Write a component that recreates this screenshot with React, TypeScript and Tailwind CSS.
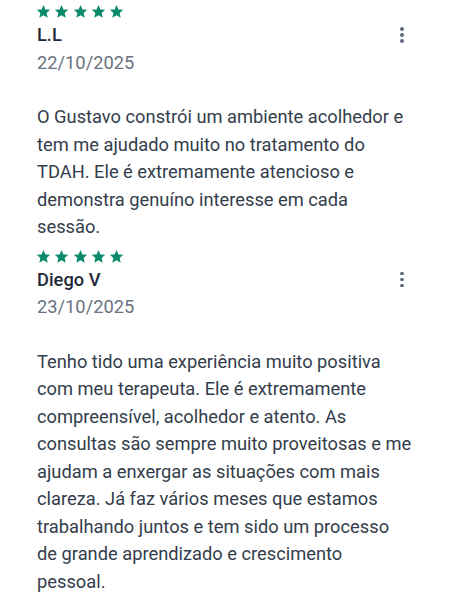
import React from 'react';

type Review = { name: string; date: string; text: string };

const reviews: Review[] = [
  {
    name: 'L.L',
    date: '22/10/2025',
    text: 'O Gustavo constrói um ambiente acolhedor e tem me ajudado muito no tratamento do TDAH. Ele é extremamente atencioso e demonstra genuíno interesse em cada sessão.',
  },
  {
    name: 'Diego V',
    date: '23/10/2025',
    text: 'Tenho tido uma experiência muito positiva com meu terapeuta. Ele é extremamente compreensível, acolhedor e atento. As consultas são sempre muito proveitosas e me ajudam a enxergar as situações com mais clareza. Já faz vários meses que estamos trabalhando juntos e tem sido um processo de grande aprendizado e crescimento pessoal.',
  },
];

const Star = () => (
  <svg width="15" height="15" viewBox="0 0 24 24" className="fill-[#0b8a6b]">
    <path d="M12 1.5l3.1 7.1 7.7.7-5.8 5.1 1.7 7.6L12 18l-6.7 4 1.7-7.6-5.8-5.1 7.7-.7z" />
  </svg>
);

const Kebab = () => (
  <button className="w-[24px] h-[24px] flex flex-col items-center justify-center gap-[2.5px]">
    <span className="w-[3.5px] h-[3.5px] rounded-full bg-[#5f6b7b]" />
    <span className="w-[3.5px] h-[3.5px] rounded-full bg-[#5f6b7b]" />
    <span className="w-[3.5px] h-[3.5px] rounded-full bg-[#5f6b7b]" />
  </button>
);

const ReviewCard: React.FC<{ review: Review }> = ({ review }) => (
  <div className="mb-[8px]">
    <div className="flex gap-[3.3px] h-[15px] -ml-[1px]">
      {[0, 1, 2, 3, 4].map(i => <Star key={i} />)}
    </div>
    <div className="mt-[2px] flex items-center justify-between">
      <span className="text-[18.3px] leading-[27.5px] font-medium text-[#1f2937]">{review.name}</span>
      <Kebab />
    </div>
    <div className="text-[18.3px] leading-[27.5px] text-[#6b7280]">{review.date}</div>
    <p className="mt-[27px] w-[375px] text-[18.3px] leading-[27.5px] text-[#333d4b]">{review.text}</p>
  </div>
);

export default function App() {
  return (
    <div className="w-[450px] h-[600px] bg-white overflow-hidden pt-[4px] pl-[37px]" style={{ fontFamily: 'Roboto, "Liberation Sans", sans-serif' }}>
      <div className="w-[377px]">
        {reviews.map(r => <ReviewCard key={r.name} review={r} />)}
      </div>
    </div>
  );
}
